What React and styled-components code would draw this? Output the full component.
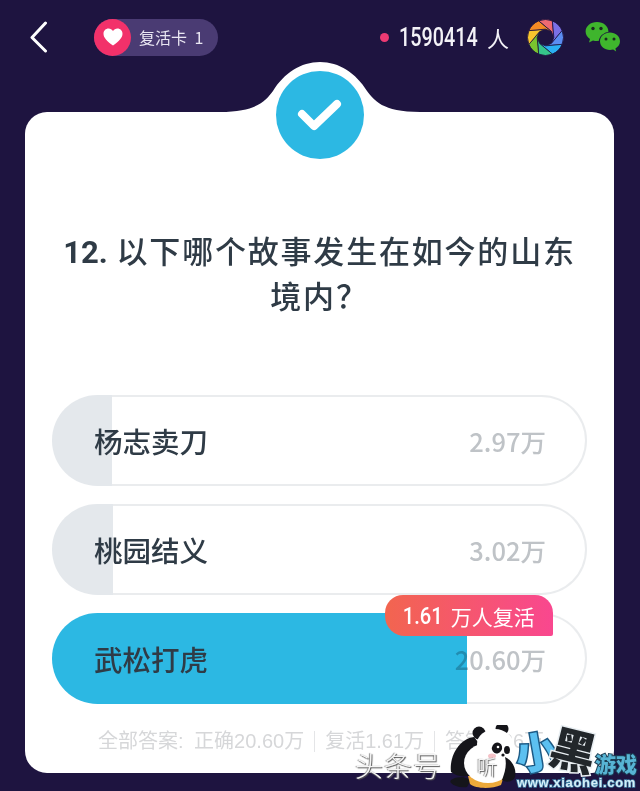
import React from "react"
import styled, { createGlobalStyle } from "styled-components"

const GlobalStyle = createGlobalStyle`
  html, body {
    margin: 0;
    padding: 0;
    background: #1e1440;
  }
  * {
    box-sizing: border-box;
  }
`

const cjk = `"Noto Sans CJK SC", "Noto Sans", sans-serif`

const Page = styled.div`
  position: relative;
  width: 640px;
  height: 791px;
  overflow: hidden;
  background: #1e1440;
  font-family: ${cjk};
`

const TopBar = styled.header`
  display: flex;
  align-items: center;
  height: 74px;
  padding: 0 19px 0 29px;
`

const BackButton = styled.div`
  display: flex;
  width: 65px;
`

const CardPill = styled.div`
  display: flex;
  align-items: center;
  height: 37px;
  width: 124px;
  border-radius: 19px;
  background: #4a3b73;
  color: #e9e6f2;
  font-size: 16px;
  word-spacing: 4px;
  gap: 8px;
`

const HeartDisc = styled.div`
  display: flex;
  align-items: center;
  justify-content: center;
  width: 37px;
  height: 37px;
  border-radius: 50%;
  background: #f2316a;
`

const Online = styled.div`
  display: flex;
  align-items: center;
  margin-left: auto;
  color: #f3f2f7;
`

const Dot = styled.span`
  width: 9px;
  height: 9px;
  border-radius: 50%;
  background: #ec3a73;
  margin-right: 10px;
`

const Count = styled.span`
  display: inline-block;
  font-family: Roboto, sans-serif;
  font-size: 26px;
  font-weight: 500;
  transform: scaleX(0.76);
  transform-origin: left center;
  margin-right: -24px;
`

const Unit = styled.span`
  font-size: 22px;
  margin-left: 9px;
`

const Icons = styled.div`
  display: flex;
  align-items: center;
  gap: 21px;
  margin-left: 18px;
`

const Card = styled.main`
  position: relative;
  margin: 38px 26px 0 25px;
  height: 661px;
  background: #fff;
  border-radius: 22px;
  padding: 115px 27px 0;
`

const Notch = styled.svg`
  position: absolute;
  left: 195px;
  top: -50px;
`

const Question = styled.h1`
  height: 90px;
  margin: 0 0 78px;
  text-align: center;
  font-size: 31px;
  font-weight: 500;
  line-height: 45px;
  letter-spacing: 1.8px;
  color: #2f3b46;
`

const QuestionNo = styled.b`
  font-family: Roboto, sans-serif;
  font-size: 31px;
  font-weight: 700;
  line-height: 1;
  letter-spacing: 0;
`

const Options = styled.div`
  display: flex;
  flex-direction: column;
  gap: 18px;
`

const Option = styled.div`
  position: relative;
  display: flex;
  align-items: center;
  justify-content: space-between;
  height: 91px;
  padding: 0 39px 0 40px;
  border: 2px solid transparent;
  border-radius: 46px;
  background:
    linear-gradient(
        to right,
        ${({ $tint }) => $tint} ${({ $fill }) => $fill}px,
        transparent ${({ $fill }) => $fill}px
      )
      border-box,
    linear-gradient(#fff, #fff) padding-box,
    linear-gradient(#eaecee, #eaecee) border-box;
`

const Label = styled.span`
  font-size: 28.5px;
  font-weight: 500;
  color: #2f3b46;
`

const Votes = styled.span`
  font-size: 25.5px;
  font-weight: 500;
  color: #bfc3c7;
  mix-blend-mode: multiply;
`

const ReviveTag = styled.div`
  position: absolute;
  right: 32px;
  top: -20px;
  display: flex;
  align-items: center;
  justify-content: center;
  gap: 8px;
  width: 168px;
  height: 41px;
  border-radius: 18px 18px 2px 20px;
  background: linear-gradient(to right, #f2654f, #f9478f);
  color: #fff;
  font-size: 21px;
`

const TagNumber = styled.span`
  display: inline-block;
  font-family: Roboto, sans-serif;
  font-size: 24px;
  font-weight: 500;
  transform: scaleX(0.84);
  margin: 0 -4px;
`

const Summary = styled.div`
  display: flex;
  align-items: center;
  margin: 24px 0 0 46px;
  font-family: "Liberation Sans", ${cjk};
  font-size: 20px;
  word-spacing: 5px;
  line-height: 26px;
  white-space: nowrap;
  color: #d6d7d9;
`

const Sep = styled.i`
  width: 1px;
  height: 21px;
  margin: 0 10px;
  background: #e4e5e7;
`

const Watermark = styled.div`
  position: absolute;
  left: 0;
  top: 0;
  width: 640px;
  height: 791px;
  pointer-events: none;
`

const Mark = styled.span`
  position: absolute;
  left: ${({ $x }) => $x}px;
  top: ${({ $y }) => $y}px;
  white-space: nowrap;
  line-height: 1;
`

const Toutiao = styled(Mark)`
  font-size: ${({ $size }) => $size}px;
  font-weight: 300;
  color: #f5f5f5;
  letter-spacing: 1px;
  text-shadow: 1px 1px 1px #555, -1px 0 1px #888;
`

const LogoSmall = styled(Mark)`
  font-size: 42px;
  font-weight: 900;
  color: #5cc0f0;
  -webkit-text-stroke: 3px #1d5a85;
  paint-order: stroke fill;
  transform: rotate(-10deg);
`

const LogoDark = styled(Mark)`
  font-size: 46px;
  font-weight: 900;
  color: #22272b;
  -webkit-text-stroke: 3px #e8eef2;
  paint-order: stroke fill;
  transform: rotate(14deg);
`

const LogoGame = styled(Mark)`
  font-size: 21px;
  font-weight: 900;
  color: #57b4d4;
  -webkit-text-stroke: 2px #1c3f55;
  paint-order: stroke fill;
`

const LogoUrl = styled(Mark)`
  font-family: "Liberation Sans", sans-serif;
  font-size: 13px;
  font-weight: 700;
  letter-spacing: 0.7px;
  color: #d6eef8;
  -webkit-text-stroke: 1.5px #3f7fa5;
  paint-order: stroke fill;
`

const apertureColors = [
  "#ef6a72",
  "#7a70e6",
  "#5b8df2",
  "#2bb0f3",
  "#36c58a",
  "#79c42f",
  "#f9c62d",
  "#f58a24",
]

function Aperture() {
  return (
    <svg width="37" height="37" viewBox="-18.5 -18.5 37 37">
      {apertureColors.map((c, i) => (
        <path
          key={c}
          d="M-6.9 -16.6 A18 18 0 0 1 6.9 -16.6 L8.4 0 L5.9 -5.9 Z"
          fill={c}
          stroke="#1e1440"
          strokeWidth="0.8"
          transform={`rotate(${i * 45})`}
        />
      ))}
    </svg>
  )
}

function WeChat() {
  return (
    <svg width="36" height="32" viewBox="0 0 36 32">
      <path
        d="M12 1C5.6 1 .6 5.2.6 10.5c0 3.1 1.7 5.7 4.4 7.5l-1 3.6 4-2.2c1.3.4 2.6.6 4 .6 6.4 0 11.4-4.2 11.4-9.5S18.400 1 12 1Z"
        fill="#3fb52d"
      />
      <ellipse cx="25" cy="20.500" rx="11.200" ry="9.700" fill="#1e1440" />
      <path
        d="M25 11.500c-5.500 0-10 3.900-10 8.800s4.500 8.800 10 8.800c1.100 0 2.200-.2 3.200-.5l3 1.800-.8-2.900c2.800-1.600 4.600-4.200 4.600-7.200 0-4.900-4.500-8.800-10-8.800Z"
        fill="#3fb52d"
      />
      <circle cx="8" cy="7.500" r="1.700" fill="#1b2a20" />
      <circle cx="16" cy="7.500" r="1.700" fill="#1b2a20" />
      <circle cx="21" cy="18" r="1.500" fill="#1b2a20" />
      <circle cx="29" cy="18" r="1.500" fill="#1b2a20" />
    </svg>
  )
}

const PandaSvg = styled.svg`
  position: absolute;
  left: 448px;
  top: 725px;
`

function Panda() {
  return (
    <PandaSvg width="72" height="66" viewBox="448 725 72 66">
      <path d="M451 783c-3-3 4-6 12-6l8 3-4 7c-7 1-13-1-16-4Z" fill="#15151a" />
      <path d="M468 776h36l-3 9c-9 4-25 4-31-1Z" fill="#eda93a" />
      <path
        d="M451 772c-2-14 7-33 23-35l8 10-12 28c-6 3-14 1-19-3Z"
        fill="#15151a"
      />
      <ellipse cx="488" cy="763" rx="24" ry="20" fill="#fff" />
      <path d="M505 757c7 3 12 12 10 20-2 5-9 6-13 3 3-8 5-15 3-23Z" fill="#15151a" />
      <circle cx="479" cy="733" r="6.500" fill="#15151a" />
      <circle cx="502" cy="729" r="6.500" fill="#15151a" />
      <ellipse cx="495" cy="744" rx="18" ry="15" fill="#fff" />
      <ellipse cx="497" cy="748" rx="5" ry="5.500" fill="#15151a" transform="rotate(30 497 748)" />
      <ellipse cx="507" cy="750" rx="3" ry="4" fill="#15151a" />
      <circle cx="498" cy="747" r="1.300" fill="#fff" />
      <circle cx="503" cy="755" r="1.600" fill="#15151a" />
      <ellipse cx="492" cy="756" rx="4" ry="2.500" fill="#f5c2c7" />
    </PandaSvg>
  )
}

export default function App() {
  return (
    <Page>
      <GlobalStyle />
      <TopBar>
        <BackButton>
          <svg width="19" height="32" viewBox="0 0 19 32" fill="none">
            <path
              d="M16.500 2 3 16.500 16.500 30"
              stroke="#fff"
              strokeWidth="3"
              strokeLinecap="round"
              strokeLinejoin="round"
            />
          </svg>
        </BackButton>
        <CardPill>
          <HeartDisc>
            <svg width="20" height="18" viewBox="0 0 20 18">
              <path
                d="M10 17.500C4 13 .5 9.800.5 5.700.5 2.700 2.800.5 5.500.5c1.900 0 3.500 1 4.500 2.600C11 1.500 12.600.5 14.500.5c2.700 0 5 2.200 5 5.200 0 4.100-3.500 7.300-9.500 11.800Z"
                fill="#fff"
              />
            </svg>
          </HeartDisc>
          <span>复活卡 1</span>
        </CardPill>
        <Online>
          <Dot />
          <Count>1590414</Count>
          <Unit>人</Unit>
        </Online>
        <Icons>
          <Aperture />
          <WeChat />
        </Icons>
      </TopBar>

      <Card>
        <Notch width="200" height="115" viewBox="220 62 200 115">
          <path
            d="M220 112C258 112 266 100 273 91 284 73 301 62 320 62 339 62 356 73 367 91 374 100 382 112 420 112Z"
            fill="#fff"
          />
          <circle cx="320" cy="115" r="44" fill="#2cb8e3" />
          <path
            d="M302 114 314 126 337 104"
            fill="none"
            stroke="#fff"
            strokeWidth="8"
            strokeLinecap="round"
            strokeLinejoin="round"
          />
        </Notch>
        <Question>
          <QuestionNo>12.</QuestionNo> 以下哪个故事发生在如今的山东境内？
        </Question>
        <Options>
          <Option $fill={60} $tint="#e4e8ec">
            <Label>杨志卖刀</Label>
            <Votes>2.97万</Votes>
          </Option>
          <Option $fill={61} $tint="#e4e8ec">
            <Label>桃园结义</Label>
            <Votes>3.02万</Votes>
          </Option>
          <Option $fill={415} $tint="#2cb8e3">
            <Label>武松打虎</Label>
            <Votes>20.60万</Votes>
            <ReviveTag>
              <TagNumber>1.61</TagNumber>
              <span>万人复活</span>
            </ReviveTag>
          </Option>
        </Options>
        <Summary>
          全部答案: 正确20.60万
          <Sep />
          复活1.61万
          <Sep />
          答错6.36万
        </Summary>
      </Card>

      <Watermark>
        <Toutiao $x={355} $y={751} $size={28}>头条号</Toutiao>
        <Panda />
        <Toutiao $x={477} $y={757} $size={20}>听</Toutiao>
        <LogoSmall $x={515} $y={729}>小</LogoSmall>
        <LogoDark $x={551} $y={725}>黑</LogoDark>
        <LogoGame $x={595} $y={753}>游戏</LogoGame>
        <LogoUrl $x={517} $y={776}>www.xiaohei.com</LogoUrl>
      </Watermark>
    </Page>
  )
}
